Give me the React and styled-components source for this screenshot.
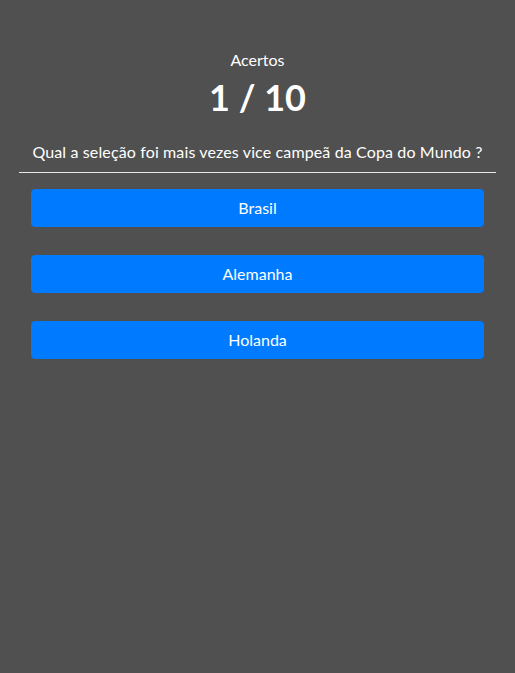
import React from 'react';
import styled, { createGlobalStyle } from 'styled-components';

const GlobalStyle = createGlobalStyle`
  html, body {
    margin: 0;
    padding: 0;
    background: #505050;
  }
  body {
    font-family: Lato, "Noto Sans", sans-serif;
    color: #fff;
  }
`;

const Page = styled.div`
  min-height: 673px;
  background: #505050;
  padding: 48px 19px 0;
  box-sizing: border-box;
`;

const ScoreLabel = styled.p`
  margin: 0;
  font-size: 16px;
  line-height: 24px;
  text-align: center;
`;

const Score = styled.h1`
  margin: 0;
  font-size: 36px;
  line-height: 50px;
  font-weight: 700;
  text-align: center;
`;

const Question = styled.p`
  margin: 18px 0 0;
  font-size: 16px;
  line-height: 24px;
  letter-spacing: 0.13px;
  text-align: center;
  padding-bottom: 8px;
  border-bottom: 1px solid #e6e6e6;
`;

const Options = styled.div`
  display: flex;
  flex-direction: column;
  gap: 28px;
  padding: 16px 12px 0;
`;

const OptionButton = styled.button`
  height: 38px;
  border: 1px solid #007bff;
  border-radius: 4px;
  background: #007bff;
  color: #fff;
  font-family: inherit;
  font-size: 16px;
  line-height: 24px;
  cursor: pointer;
`;

const options = ['Brasil', 'Alemanha', 'Holanda'];

export default function App() {
  return (
    <>
      <GlobalStyle />
      <Page>
        <ScoreLabel>Acertos</ScoreLabel>
        <Score>1 / 10</Score>
        <Question>Qual a seleção foi mais vezes vice campeã da Copa do Mundo ?</Question>
        <Options>
          {options.map((o) => (
            <OptionButton key={o}>{o}</OptionButton>
          ))}
        </Options>
      </Page>
    </>
  );
}
